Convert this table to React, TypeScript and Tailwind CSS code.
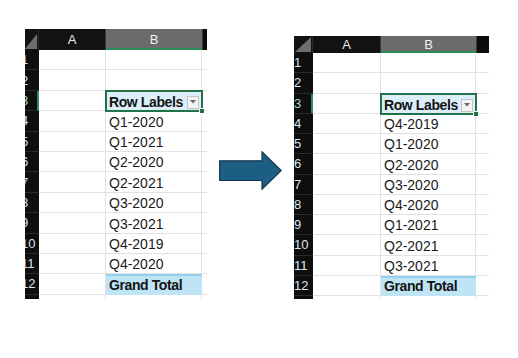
import React from "react";

type SheetProps = {
  rhWidth: number;
  numShift: string;
  colA: string;
  colB: string;
  colC: string;
  headerH: string;
  rowH: string;
  tailH: string;
  items: string[];
  triangle: { w: number; h: number };
};

const GRID = "border-[#e1e1e1]";

function Sheet({ numShift, colA, colB, colC, headerH, rowH, tailH, items, triangle, rhWidth }: SheetProps) {
  const rows = ["", "", "Row Labels", ...items, "Grand Total"];
  return (
    <div className="flex flex-col bg-white" style={{ fontFamily: '"Liberation Sans", Arial, sans-serif' }}>
      <div className={`flex ${headerH}`}>
        <div className="relative bg-[#121212] overflow-hidden border-r border-[#2a2a2a]" style={{ width: rhWidth }}>
          <svg className="absolute right-[1px] bottom-[1px]" width={triangle.w} height={triangle.h} viewBox={`0 0 ${triangle.w} ${triangle.h}`}>
            <polygon points={`${triangle.w},0 ${triangle.w},${triangle.h} 0,${triangle.h}`} fill="#6e6e6e" />
          </svg>
        </div>
        <div className={`${colA} bg-[#121212] border-r border-[#3a3a3a] flex items-center justify-center text-[13px] text-[#e6e6e6]`}>A</div>
        <div className={`${colB} bg-[#6b6b6b] border-b-2 border-[#2e8b57] flex items-center justify-center text-[13px] text-[#f2f2f2] pt-[2px]`}>B</div>
        <div className={`${colC} bg-[#0c0c0c] border-l border-[#3a3a3a]`} />
      </div>
      {rows.map((label, i) => {
        const n = i + 1;
        const isHeader = n === 3;
        const isTotal = n === 12;
        return (
          <div key={n} className={`flex ${rowH}`}>
            <div
              className={`bg-[#0e0e0e] overflow-hidden flex items-center border-b border-[#2a2a2a] text-[13px] leading-none ${
                isHeader ? "border-r-2 border-r-[#2e8b57] text-[#a8dcb8]" : "text-[#dde6ee]"
              }`}
              style={{ width: rhWidth }}
            >
              <span className={`${numShift} whitespace-nowrap`}>{n}</span>
            </div>
            <div className={`${colA} border-b border-r ${GRID}`} />
            {isHeader ? (
              <div className={`${colB} relative bg-[#dbeef9] flex items-end pb-[1px] pl-[3px] text-[14px] leading-[16px] font-bold text-[#141414] tracking-[-0.4px]`}>
                <span>{label}</span>
                <div className="absolute inset-[-1px] border-2 border-[#217346]" />
                <div className="absolute right-[3px] top-[5px] w-[12px] h-[13px] bg-[#f3f3f3] border border-[#c4c4c4] flex items-center justify-center">
                  <svg width="6" height="4" viewBox="0 0 6 4">
                    <polygon points="0,0 6,0 3,3.5" fill="#6a6a6a" />
                  </svg>
                </div>
                <div className="absolute right-[-3px] bottom-[-3px] w-[6px] h-[6px] bg-[#217346] border border-white" />
              </div>
            ) : isTotal ? (
              <div className={`${colB} bg-[#bfe4f5] border-t-2 border-[#95cfea] flex items-end pb-[2px] pl-[3px] text-[14px] leading-[16px] font-bold text-[#141414] tracking-[-0.4px]`}>
                {label}
              </div>
            ) : (
              <div className={`${colB} border-b border-r ${GRID} flex items-end pb-[1px] pl-[3px] text-[14px] leading-[16px] text-[#1a1a1a]`}>
                {label}
              </div>
            )}
            <div className={`${colC} border-b ${GRID}`} />
          </div>
        );
      })}
      <div className={`flex ${tailH}`}>
        <div className="bg-[#0e0e0e]" style={{ width: rhWidth }} />
        <div className={`${colA} border-r ${GRID}`} />
        <div className={`${colB} border-r ${GRID}`} />
        <div className={colC} />
      </div>
    </div>
  );
}

export default function App() {
  return (
    <div className="w-[518px] h-[358px] bg-white flex items-start pl-[25px] pt-[29px] overflow-hidden">
      <Sheet
        rhWidth={14}
        numShift="ml-[-4px]"
        colA="w-[67px]"
        colB="w-[96px]"
        colC="w-[5px]"
        headerH="h-[21px]"
        rowH="h-[20.4px]"
        tailH="h-[4px]"
        triangle={{ w: 12, h: 15 }}
        items={["Q1-2020", "Q1-2021", "Q2-2020", "Q2-2021", "Q3-2020", "Q3-2021", "Q4-2019", "Q4-2020"]}
      />
      <div className="ml-[12px] mt-[122px] w-[63px] h-[39px]">
        <svg width="63" height="39" viewBox="0 0 63 39">
          <path d="M0.7,9.8 L43,9.8 L43,0.8 L62.2,19.5 L43,38.2 L43,29.5 L0.7,29.5 Z" fill="#1d5f84" stroke="#10344a" strokeWidth="1.2" strokeLinejoin="miter" />
        </svg>
      </div>
      <div className="ml-[12px] mt-[7px]">
        <Sheet
          rhWidth={19}
          numShift="ml-0"
          colA="w-[68px]"
          colB="w-[95px]"
          colC="w-[13px]"
          headerH="h-[17px]"
          rowH="h-[20.25px]"
          tailH="h-[3px]"
          triangle={{ w: 16, h: 15 }}
          items={["Q4-2019", "Q1-2020", "Q2-2020", "Q3-2020", "Q4-2020", "Q1-2021", "Q2-2021", "Q3-2021"]}
        />
      </div>
    </div>
  );
}
